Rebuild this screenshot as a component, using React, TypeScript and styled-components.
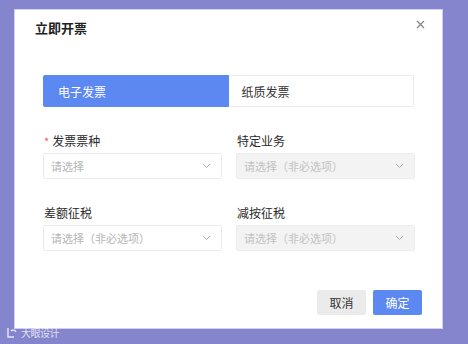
import React from "react";
import styled, { createGlobalStyle } from "styled-components";

const GlobalStyle = createGlobalStyle`
  html, body {
    margin: 0;
    padding: 0;
    background: #8585cd;
    font-family: "Noto Sans CJK SC", "Noto Sans", sans-serif;
  }
`;

const Page = styled.div`
  position: relative;
  width: 468px;
  height: 344px;
  padding: 9px 0 0 14px;
  box-sizing: border-box;
`;

const Dialog = styled.div`
  width: 429px;
  height: 320px;
  box-sizing: border-box;
  background: #fff;
  border: 1px solid #cfcff2;
  padding: 5px 28px 13px 28px;
  display: flex;
  flex-direction: column;
`;

const Header = styled.div`
  display: flex;
  justify-content: space-between;
  align-items: center;
  height: 24px;
  margin-left: -8px;
  margin-right: -12px;
`;

const Title = styled.h1`
  margin: 0;
  font-size: 13px;
  font-weight: 700;
  color: #222;
`;

const Close = styled.button`
  border: none;
  background: none;
  padding: 0;
  width: 12px;
  height: 12px;
  margin-bottom: 6px;
  display: flex;
  align-items: center;
  justify-content: center;
  cursor: pointer;
`;

const Tabs = styled.div`
  display: grid;
  grid-template-columns: 1fr 1fr;
  height: 32px;
  margin-top: 36px;
`;

const Tab = styled.div<{ $active?: boolean }>`
  display: flex;
  align-items: center;
  padding-left: ${(p) => (p.$active ? "14px" : "13px")};
  font-size: 12px;
  box-sizing: border-box;
  border-radius: ${(p) => (p.$active ? "2px 0 0 2px" : "0 2px 2px 0")};
  background: ${(p) => (p.$active ? "#5c88f2" : "#fff")};
  color: ${(p) => (p.$active ? "#fff" : "#333")};
  border: 1px solid ${(p) => (p.$active ? "#5c88f2" : "#ebebeb")};
  border-left: ${(p) => (p.$active ? "1px solid #5c88f2" : "none")};
`;

const FormGrid = styled.div`
  display: grid;
  grid-template-columns: 179px 179px;
  column-gap: 14px;
  row-gap: 26px;
  margin-top: 26px;
`;

const Field = styled.div`
  display: flex;
  flex-direction: column;
  gap: 4px;
`;

const Label = styled.label`
  font-size: 12px;
  line-height: 16px;
  height: 16px;
  color: #2a2a2a;
  padding-left: 1px;
`;

const Star = styled.span`
  color: #f25a5a;
  font-size: 11px;
  margin-right: 3px;
`;

const Select = styled.div<{ $disabled?: boolean }>`
  height: 26px;
  box-sizing: border-box;
  border: 1px solid ${(p) => (p.$disabled ? "#ececec" : "#ebebeb")};
  border-radius: 2px;
  background: ${(p) => (p.$disabled ? "#f3f3f3" : "#fff")};
  display: flex;
  align-items: center;
  justify-content: space-between;
  padding: 0 10px 0 7px;
  font-size: 11px;
  color: ${(p) => (p.$disabled ? "#c2c2c2" : "#b5b5b5")};
`;

const Footer = styled.div`
  margin-top: auto;
  display: flex;
  justify-content: flex-end;
  gap: 7px;
  margin-right: -8px;
`;

const Button = styled.button<{ $primary?: boolean }>`
  width: 49px;
  height: 25px;
  border: none;
  border-radius: 2px;
  font-family: inherit;
  font-size: 12px;
  background: ${(p) => (p.$primary ? "#5c88f2" : "#ebebeb")};
  color: ${(p) => (p.$primary ? "#fff" : "#333")};
  cursor: pointer;
`;

const Watermark = styled.div`
  position: absolute;
  left: 6px;
  bottom: 4px;
  display: flex;
  align-items: center;
  gap: 3px;
  font-size: 10px;
  color: rgba(255, 255, 255, 0.75);
  letter-spacing: -0.5px;
`;

const Chevron = () => (
  <svg width="9" height="6" viewBox="0 0 9 6" fill="none">
    <path d="M1 1l3.5 3.5L8 1" stroke="#b0b0b0" strokeWidth="1" />
  </svg>
);

const fields = [
  { label: "发票票种", required: true, placeholder: "请选择", disabled: false },
  { label: "特定业务", placeholder: "请选择（非必选项）", disabled: true },
  { label: "差额征税", placeholder: "请选择（非必选项）", disabled: false },
  { label: "减按征税", placeholder: "请选择（非必选项）", disabled: true },
];

export default function App() {
  return (
    <Page>
      <GlobalStyle />
      <Dialog>
        <Header>
          <Title>立即开票</Title>
          <Close aria-label="关闭">
            <svg width="9" height="9" viewBox="0 0 9 9">
              <path d="M1 1l7 7M8 1L1 8" stroke="#8a8a8a" strokeWidth="1.4" />
            </svg>
          </Close>
        </Header>

        <Tabs>
          <Tab $active>电子发票</Tab>
          <Tab>纸质发票</Tab>
        </Tabs>

        <FormGrid>
          {fields.map((f) => (
            <Field key={f.label}>
              <Label>
                {f.required && <Star>*</Star>}
                {f.label}
              </Label>
              <Select $disabled={f.disabled}>
                <span>{f.placeholder}</span>
                <Chevron />
              </Select>
            </Field>
          ))}
        </FormGrid>

        <Footer>
          <Button>取消</Button>
          <Button $primary>确定</Button>
        </Footer>
      </Dialog>

      <Watermark>
        <svg width="12" height="11" viewBox="0 0 12 11" fill="none">
          <path d="M2 1v9h6M5 4a3 3 0 0 1 5 1" stroke="rgba(255,255,255,0.8)" strokeWidth="1.4" />
        </svg>
        <span>大眼设计</span>
      </Watermark>
    </Page>
  );
}
